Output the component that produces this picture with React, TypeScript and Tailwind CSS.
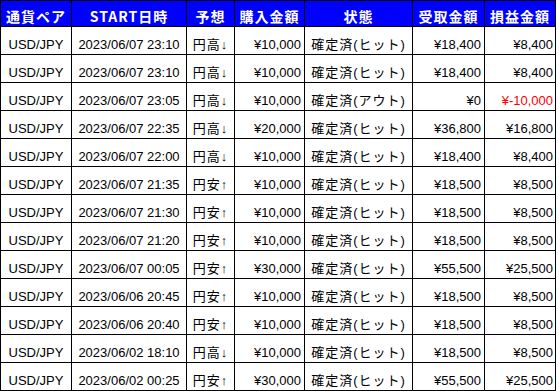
import React from "react";

type Row = [string, string, string, string, string, string, string, boolean?];

const rows: Row[] = [
  ["USD/JPY", "2023/06/07 23:10", "円高↓", "¥10,000", "確定済(ヒット)", "¥18,400", "¥8,400"],
  ["USD/JPY", "2023/06/07 23:10", "円高↓", "¥10,000", "確定済(ヒット)", "¥18,400", "¥8,400"],
  ["USD/JPY", "2023/06/07 23:05", "円高↓", "¥10,000", "確定済(アウト)", "¥0", "¥-10,000", true],
  ["USD/JPY", "2023/06/07 22:35", "円高↓", "¥20,000", "確定済(ヒット)", "¥36,800", "¥16,800"],
  ["USD/JPY", "2023/06/07 22:00", "円高↓", "¥10,000", "確定済(ヒット)", "¥18,400", "¥8,400"],
  ["USD/JPY", "2023/06/07 21:35", "円安↑", "¥10,000", "確定済(ヒット)", "¥18,500", "¥8,500"],
  ["USD/JPY", "2023/06/07 21:30", "円安↑", "¥10,000", "確定済(ヒット)", "¥18,500", "¥8,500"],
  ["USD/JPY", "2023/06/07 21:20", "円安↑", "¥10,000", "確定済(ヒット)", "¥18,500", "¥8,500"],
  ["USD/JPY", "2023/06/07 00:05", "円安↑", "¥30,000", "確定済(ヒット)", "¥55,500", "¥25,500"],
  ["USD/JPY", "2023/06/06 20:45", "円安↑", "¥10,000", "確定済(ヒット)", "¥18,500", "¥8,500"],
  ["USD/JPY", "2023/06/06 20:40", "円安↑", "¥10,000", "確定済(ヒット)", "¥18,500", "¥8,500"],
  ["USD/JPY", "2023/06/02 18:10", "円高↓", "¥10,000", "確定済(ヒット)", "¥18,500", "¥8,500"],
  ["USD/JPY", "2023/06/02 00:25", "円安↑", "¥30,000", "確定済(ヒット)", "¥55,500", "¥25,500"],
];

const headers = ["通貨ペア", "START日時", "予想", "購入金額", "状態", "受取金額", "損益金額"];

const align = [
  "justify-center",
  "justify-center",
  "justify-center tracking-[1px]",
  "justify-end pr-[3px]",
  "justify-center tracking-[1px]",
  "justify-end pr-[3px]",
  "justify-end pr-[2px]",
];

export default function App() {
  return (
    <div className="w-[557px] h-[391px] bg-white overflow-hidden">
      <div
        className="grid grid-cols-[71px_115px_48px_70px_108px_72px_71px] border-l border-t border-black w-[556px]"
        style={{ fontFamily: '"Liberation Sans", "Noto Sans CJK JP", sans-serif' }}
      >
        {headers.map((h) => (
          <div
            key={h}
            className="h-[26px] bg-[#0000ff] border-r border-b border-black flex items-end justify-center pb-[1px] text-white font-bold text-[14px] leading-[18px] tracking-[1px]"
            style={{ fontFamily: '"Noto Sans CJK JP", sans-serif' }}
          >
            {h}
          </div>
        ))}
        {rows.map((r, ri) =>
          r.slice(0, 7).map((c, ci) => (
            <div
              key={ri + "-" + ci}
              className={
                "h-[28px] border-r border-b border-black flex items-end pb-[1px] text-[13px] leading-[16px] whitespace-nowrap " +
                align[ci] +
                (ci === 6 && r[7] ? " text-[#ff0000]" : " text-black")
              }
            >
              {c as string}
            </div>
          ))
        )}
      </div>
    </div>
  );
}
